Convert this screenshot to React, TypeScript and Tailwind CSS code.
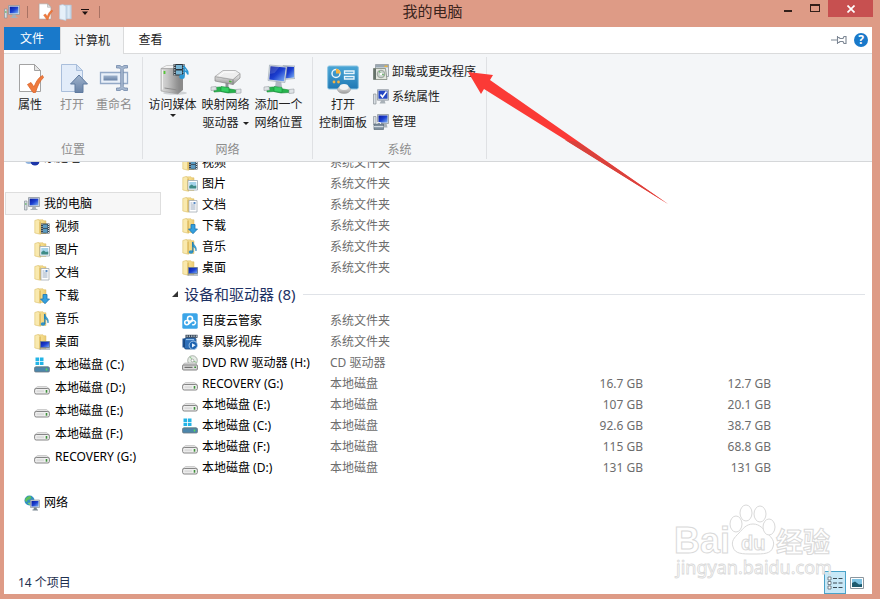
import clsx from 'clsx'
import React from 'react'

type IconName =
  | 'computer'
  | 'network'
  | 'homegroup'
  | 'video'
  | 'picture'
  | 'document'
  | 'download'
  | 'music'
  | 'desktop'
  | 'system'
  | 'disk'
  | 'dvd'
  | 'cloud'
  | 'player'

interface TreeItem {
  icon: IconName
  name: string
}

interface FileItem extends TreeItem {
  type: string
  total?: string
  free?: string
}

const treeItems: TreeItem[] = [
  { icon: 'video', name: '视频' },
  { icon: 'picture', name: '图片' },
  { icon: 'document', name: '文档' },
  { icon: 'download', name: '下载' },
  { icon: 'music', name: '音乐' },
  { icon: 'desktop', name: '桌面' },
  { icon: 'system', name: '本地磁盘 (C:)' },
  { icon: 'disk', name: '本地磁盘 (D:)' },
  { icon: 'disk', name: '本地磁盘 (E:)' },
  { icon: 'disk', name: '本地磁盘 (F:)' },
  { icon: 'disk', name: 'RECOVERY (G:)' },
]

const folders: FileItem[] = [
  { icon: 'video', name: '视频', type: '系统文件夹' },
  { icon: 'picture', name: '图片', type: '系统文件夹' },
  { icon: 'document', name: '文档', type: '系统文件夹' },
  { icon: 'download', name: '下载', type: '系统文件夹' },
  { icon: 'music', name: '音乐', type: '系统文件夹' },
  { icon: 'desktop', name: '桌面', type: '系统文件夹' },
]

const devices: FileItem[] = [
  { icon: 'cloud', name: '百度云管家', type: '系统文件夹' },
  { icon: 'player', name: '暴风影视库', type: '系统文件夹' },
  { icon: 'dvd', name: 'DVD RW 驱动器 (H:)', type: 'CD 驱动器' },
  { icon: 'disk', name: 'RECOVERY (G:)', type: '本地磁盘', total: '16.7 GB', free: '12.7 GB' },
  { icon: 'disk', name: '本地磁盘 (E:)', type: '本地磁盘', total: '107 GB', free: '20.1 GB' },
  { icon: 'system', name: '本地磁盘 (C:)', type: '本地磁盘', total: '92.6 GB', free: '38.7 GB' },
  { icon: 'disk', name: '本地磁盘 (F:)', type: '本地磁盘', total: '115 GB', free: '68.8 GB' },
  { icon: 'disk', name: '本地磁盘 (D:)', type: '本地磁盘', total: '131 GB', free: '131 GB' },
]

// shared gradients, referenced by id from every icon
function Gradients() {
  return (
    <svg className="absolute h-0 w-0" aria-hidden="true">
      <defs>
        <linearGradient id="screen" x1="0" y1="0" x2="1" y2="1">
          <stop offset="0" stopColor="#0a1a9c" />
          <stop offset="0.5" stopColor="#1c3fd0" />
          <stop offset="1" stopColor="#7fb4f5" />
        </linearGradient>
        <linearGradient id="folder" x1="0" y1="0" x2="1" y2="0">
          <stop offset="0" stopColor="#f6e29a" />
          <stop offset="0.55" stopColor="#f3d987" />
          <stop offset="1" stopColor="#e9ca72" />
        </linearGradient>
        <linearGradient id="metal" x1="0" y1="0" x2="0" y2="1">
          <stop offset="0" stopColor="#f4f4f4" />
          <stop offset="1" stopColor="#9b9b9b" />
        </linearGradient>
        <linearGradient id="tower" x1="0" y1="0" x2="1" y2="0">
          <stop offset="0" stopColor="#d9d9d9" />
          <stop offset="0.4" stopColor="#c4c4c4" />
          <stop offset="1" stopColor="#8f8f8f" />
        </linearGradient>
        <linearGradient id="panel" x1="0" y1="0" x2="0" y2="1">
          <stop offset="0" stopColor="#4aa6d6" />
          <stop offset="1" stopColor="#1f78b4" />
        </linearGradient>
        <linearGradient id="steel" x1="0" y1="0" x2="0" y2="1">
          <stop offset="0" stopColor="#9fb3cd" />
          <stop offset="1" stopColor="#6882a6" />
        </linearGradient>
      </defs>
    </svg>
  )
}

function FolderShape() {
  return (
    <>
      <path d="M4 .8h5l1 1h2v12.700H4z" fill="url(#folder)" stroke="#dcbf6a" strokeWidth=".5" />
      <path d="M.8 1.500L4 .5l2.500 1.800v13L.8 14z" fill="#f9e9ae" stroke="#dcbf6a" strokeWidth=".6" />
      <path d="M5.300 2.200l1.400.8v12l-1.400-.5z" fill="#dfb95c" />
    </>
  )
}

const iconShapes: Record<IconName, React.ReactNode> = {
  computer: (
    <>
      <path d="M.5 5H3v9H.5z" fill="#d8dde2" stroke="#8a9299" strokeWidth=".7" />
      <path d="M1 8h1.500" stroke="#3aa83a" />
      <path d="M4.500 1.500h11v9h-11z" fill="#cfd6dc" stroke="#8f979e" strokeWidth=".8" />
      <path d="M5.700 2.700h8.600v6.600H5.700z" fill="url(#screen)" />
      <path d="M8.500 10.500h3l.8 2.500h1.200v1h-7v-1h1.400z" fill="#a9b1b8" />
    </>
  ),
  network: (
    <>
      <circle cx="5.500" cy="5.500" r="5" fill="#2f8fc4" />
      <path d="M1.500 3.500q2-3 5-2.500l1 2-2 1.500-2 .5-.5 2-2-1z" fill="#5fc15a" />
      <path d="M3.500 8l2-.5 1 1-1 1.500z" fill="#7fd06a" />
      <path d="M6.500 5h9v7.500h-9z" fill="#cdd5dc" stroke="#8f979e" strokeWidth=".7" />
      <path d="M7.500 6h7v5.500h-7z" fill="url(#screen)" />
      <path d="M10 12.500h2.500l.5 2h1v1H8.500v-1h1z" fill="#76838e" />
    </>
  ),
  homegroup: (
    <>
      <circle cx="5" cy="10" r="4" fill="#8fb2dd" />
      <circle cx="11" cy="11" r="4.500" fill="#1c36a8" />
      <circle cx="8" cy="6" r="3" fill="#45a0cf" />
    </>
  ),
  video: (
    <>
      <FolderShape />
      <path d="M7 4.500h8.500v10H7z" fill="#35414b" />
      <path d="M9 5.500h4.500v3.800H9zM9 10h4.500v3.800H9z" fill="#5b9ac0" />
      <path d="M8 5v9.500M14.500 5v9.500" stroke="#e8eef2" strokeWidth=".9" strokeDasharray="1 1" />
    </>
  ),
  picture: (
    <>
      <FolderShape />
      <path d="M6 4.500h9.500V14H6z" fill="#fff" stroke="#9aa8b3" strokeWidth=".8" />
      <path d="M7.300 6h7v6.500h-7z" fill="#a4d3ea" />
      <path d="M7.300 12.500V10l2.500-1.500 2 1.500 2.500-.5v3z" fill="#3f8b86" />
    </>
  ),
  document: (
    <>
      <FolderShape />
      <path d="M7 3.500h8V15H7z" fill="#fff" stroke="#a2abb3" strokeWidth=".8" />
      <path d="M8.500 6h2M8.500 8h5M8.500 10h5M8.500 12h5" stroke="#7c93ad" strokeWidth=".8" />
      <path d="M11.500 5h2v2h-2z" fill="#5a8bc4" />
    </>
  ),
  download: (
    <>
      <FolderShape />
      <path d="M9 6.500h4V11h2.500L11 15.700 6.500 11H9z" fill="#34a0de" stroke="#1b74b3" strokeWidth=".8" />
    </>
  ),
  music: (
    <>
      <FolderShape />
      <path d="M10.500 3c.3 3 5 4 3.500 9-.3-3-1.500-4-3.500-4.500z" fill="#3aa2d4" stroke="#1f7fb5" strokeWidth=".6" />
      <ellipse cx="9" cy="13" rx="2.300" ry="1.800" fill="#2f93c8" />
      <path d="M10.800 3v10" stroke="#1f7fb5" strokeWidth="1.200" />
    </>
  ),
  desktop: (
    <>
      <FolderShape />
      <path d="M6.500 7.500h9v6h-9z" fill="url(#screen)" stroke="#6d7f93" strokeWidth=".9" />
      <path d="M5.500 15H16" stroke="#7b8794" />
    </>
  ),
  system: (
    <>
      <path d="M1.500.5H5V4H1.500zM5.800.5h3.700V4H5.800zM1.500 4.800H5V8H1.500zM5.800 4.800h3.700V8H5.800z" fill="#22b4e6" />
      <path d="M2 9h12l1.500 2H.5z" fill="#9fc7c9" />
      <rect x=".5" y="10" width="15" height="5" rx="1.200" fill="#4c86ab" stroke="#6f7a80" strokeWidth=".8" />
      <path d="M12.500 11.500v2" stroke="#59e04f" strokeWidth="1.500" />
    </>
  ),
  disk: (
    <>
      <path d="M3.500 6.500h9L15.500 9H.5z" fill="#e3e3e3" stroke="#b5b5b5" strokeWidth=".6" />
      <rect x=".6" y="8.500" width="14.800" height="5.500" rx="1.600" fill="#efefef" stroke="#868686" />
      <path d="M2.500 11.200h7.500" stroke="#dcdcdc" strokeWidth="2" />
      <path d="M12.500 10v2.700" stroke="#3e8f3a" strokeWidth="1.600" />
    </>
  ),
  dvd: (
    <>
      <circle cx="10.500" cy="5.500" r="4.800" fill="#e6ece6" stroke="#8e978e" strokeWidth=".7" />
      <path d="M10.500 5.500L8 1.500M10.500 5.500l4 2" stroke="#8fc48c" />
      <circle cx="10.500" cy="5.500" r="1.400" fill="#fff" stroke="#8e978e" strokeWidth=".7" />
      <path d="M2.500 8h11l2 2.500H.5z" fill="#dcdcdc" stroke="#999" strokeWidth=".5" />
      <rect x=".6" y="10" width="14.800" height="5" rx="1" fill="#dadada" stroke="#777" strokeWidth=".9" />
      <path d="M2.500 12.300h8" stroke="#555" />
      <path d="M12.300 12.300H14" stroke="#3e8f3a" strokeWidth="1.400" />
    </>
  ),
  cloud: (
    <>
      <rect x=".3" y=".3" width="15.400" height="15.400" rx="1.500" fill="#3ba5e8" />
      <g fill="none" stroke="#fff" strokeWidth="1.500">
        <circle cx="8" cy="5.800" r="2.500" />
        <circle cx="4.800" cy="9.600" r="2.100" />
        <path d="M6.500 10.800L9.800 8.200a2.100 2.100 0 1 1 .4 3.200" />
      </g>
    </>
  ),
  player: (
    <>
      <path d="M3.500.8h12v3h-12z" fill="#2c3b4c" />
      <path d="M4.500 2.200H15" stroke="#dce6ee" strokeWidth="1.200" strokeDasharray="1.300 1" />
      <path d="M.5 4.500h3v9h-3z" fill="#1d4f8f" />
      <rect x="2.500" y="4" width="11.500" height="11" rx="1.500" fill="#2f6fb8" stroke="#174479" strokeWidth=".8" />
      <path d="M4 5.500h8" stroke="#8fc1ee" strokeWidth="1.200" />
      <circle cx="11.300" cy="11.300" r="4.200" fill="#1e63b0" stroke="#b9d8f2" strokeWidth=".8" />
      <path d="M10 9.200l3.600 2.100-3.600 2.100z" fill="#e9f4fd" />
    </>
  ),
}

function Icon({ name }: { name: IconName }) {
  return (
    <svg viewBox="0 0 16 16" className="h-4 w-4 shrink-0" aria-hidden="true">
      {iconShapes[name]}
    </svg>
  )
}

function PageIcon({ className }: { className?: string }) {
  return (
    <svg viewBox="0 0 32 32" className={className} aria-hidden="true">
      <path d="M5.500 1.500h15l6 6v21h-21z" fill="#fff" stroke="#a3a3a3" />
      <path d="M20.500 1.500v6h6z" fill="#e6e6e6" stroke="#a3a3a3" />
      <path d="M13.500 21.500l3.500-2 3 4.500c2-5.500 4.500-9.500 8.500-11.500l1 2c-4 4-6 8.500-8 15H19z" fill="#ef7a3c" stroke="#d9632a" strokeWidth=".8" />
    </svg>
  )
}

function OpenIcon() {
  return (
    <svg viewBox="0 0 32 32" className="h-8 w-8" aria-hidden="true">
      <path d="M5.500 1.500h15l6 6v21h-21z" fill="#e2ecf9" stroke="#a9bedb" />
      <path d="M20.500 1.500v6h6z" fill="#cfdef1" stroke="#a9bedb" />
      <path d="M23 12l8.500 9H27v8.500h-8V21h-4.500z" fill="url(#steel)" stroke="#5f7a9f" />
    </svg>
  )
}

function RenameIcon() {
  return (
    <svg viewBox="0 0 32 32" className="h-8 w-8" aria-hidden="true">
      <path d="M2.500 9.500h27v11h-27z" fill="#e9f0f9" stroke="#93a9c7" strokeWidth="1.300" />
      <path d="M5.500 12.500h14v5h-14z" fill="url(#steel)" />
      <path d="M18.500 2.500H22l2 1.500 2-1.500h3.500V5h-3l-1.200 1.500v17l1.200 1.500h3v2.500H26L24 26l-2 1.500h-3.500V25h3l1.200-1.500v-17L21.500 5h-3z" fill="#a5b7cf" stroke="#7189ab" strokeWidth=".8" />
    </svg>
  )
}

function MediaIcon() {
  return (
    <svg viewBox="0 0 32 32" className="h-8 w-8" aria-hidden="true">
      <ellipse cx="18" cy="30" rx="12" ry="1.800" fill="#cfd2d5" />
      <path d="M4 5.500L9.500 2.500H26l-5 3z" fill="#f3f3f3" stroke="#a5a5a5" strokeWidth=".5" />
      <path d="M21 5.500l5-3V27l-5 4z" fill="#8b8b8b" />
      <path d="M4 5.500h17V31L4 28z" fill="url(#tower)" stroke="#999" strokeWidth=".6" />
      <path d="M5.500 7v19.500" stroke="#f1f1f1" />
      <path d="M7.500 8v3" stroke="#55c536" strokeWidth="1.800" />
      <path d="M7.500 25l12 1.800" stroke="#8c8c8c" />
      <path d="M16.500 1h11v11.500h-11z" fill="#27323b" />
      <path d="M19 2h6v4h-6zM19 7.500h6v4h-6z" fill="#79b6d5" />
      <path d="M17.800 1.500v11M26.300 1.500v11" stroke="#fff" strokeDasharray="1.200 1.200" />
      <path d="M27 13.500V2.500c0 3 5 3.500 3.800 9-.4-2.500-1.800-3.500-3.800-4" fill="none" stroke="#2b96d3" strokeWidth="1.400" />
      <ellipse cx="25" cy="13.800" rx="2.700" ry="2.200" fill="#2b96d3" />
    </svg>
  )
}

function Cable() {
  return (
    <>
      <path d="M4 24.500l6-.5 4 1.500 5 .3 7 1.200v2.500l-8 .5-7-1.500-7 .5z" fill="#27b34d" stroke="#188a38" strokeWidth=".6" />
      <path d="M1 24l5-.5.5 3.500-5.500.5zM26 26.500l5-.5v4l-5 .5z" fill="#dfe3e6" stroke="#9aa0a5" strokeWidth=".6" />
      <path d="M11 23.500l8 1v5l-8-1z" fill="#35cf62" stroke="#188a38" strokeWidth=".6" />
    </>
  )
}

function MapDriveIcon() {
  return (
    <svg viewBox="0 0 32 32" className="h-8 w-8" aria-hidden="true">
      <path d="M17 18v7" stroke="#8f9599" strokeWidth="3" />
      <Cable />
      <path d="M5 13.500l18 3v5l-18-3.500zM23 16.500l7-6v4.500l-7 6.500z" fill="url(#metal)" stroke="#868686" strokeWidth=".7" />
      <path d="M5 13.500L13 7.500h12.500l4.500 3-7 6z" fill="#eeeeee" stroke="#a0a0a0" strokeWidth=".7" />
      <path d="M9 13l5.500-4h10" stroke="#fff" fill="none" />
      <path d="M19 18.300l2.500.5" stroke="#49b637" strokeWidth="1.500" />
    </svg>
  )
}

function AddLocationIcon() {
  return (
    <svg viewBox="0 0 32 32" className="h-8 w-8" aria-hidden="true">
      <path d="M20 2.500l12 .5v12.500l-12 1z" fill="#d5dde5" stroke="#97a2ac" strokeWidth=".6" />
      <path d="M21 3.500l10 .5v10.500l-10 1z" fill="url(#screen)" />
      <path d="M13 17h5l1 7h-7z" fill="#aeb8c1" />
      <Cable />
      <path d="M6.500 2L24 3.500 22 19.500 5 17.500z" fill="#d5dde5" stroke="#97a2ac" strokeWidth=".6" />
      <path d="M7.500 3.200l15.300 1.300L21 18.200 6.300 16.500z" fill="url(#screen)" />
      <path d="M7.500 3.200l9 .8-5 6-4.700 1z" fill="#fff" opacity=".15" />
    </svg>
  )
}

function ControlPanelIcon() {
  return (
    <svg viewBox="0 0 32 32" className="h-8 w-8" aria-hidden="true">
      <rect x=".7" y="3" width="30.600" height="23" rx="1.500" fill="url(#panel)" stroke="#8bc4e2" />
      <circle cx="9" cy="10.500" r="4" fill="none" stroke="#e8f5fc" strokeWidth="1.500" />
      <path d="M9 10.500V5.800a4.700 4.700 0 0 1 4.700 4.700z" fill="#f5b341" />
      <path d="M17.500 8H27v2.500h-9.500zM17.500 13.500H27V16h-9.500z" fill="none" stroke="#e8f5fc" strokeWidth="1.300" />
      <circle cx="7" cy="19" r="1.400" fill="#f5b341" />
      <circle cx="11.500" cy="19" r="1.400" fill="#f5b341" />
      <ellipse cx="17" cy="26.500" rx="6.500" ry="4" fill="url(#metal)" stroke="#a5a5a5" strokeWidth=".6" />
      <ellipse cx="17" cy="24" rx="4.500" ry="3" fill="#f3f3f3" />
    </svg>
  )
}

function UninstallIcon() {
  return (
    <svg viewBox="0 0 16 16" className="h-4 w-4 shrink-0" aria-hidden="true">
      <path d="M2.500.5h13v12h-13z" fill="#e8edf0" stroke="#8b969d" strokeWidth=".8" />
      <path d="M3 1h12v2.500H3z" fill="#9aa8b3" />
      <path d="M11.500 1.500h3v1.500h-3z" fill="#e9b23d" />
      <path d="M.5 4.500h12l1.500 11H.5z" fill="#e3e7df" stroke="#7f887c" strokeWidth=".8" />
      <path d="M.5 4.500H3v11H.5z" fill="#66726a" />
      <circle cx="8" cy="10" r="3.800" fill="#c9d3cc" stroke="#8b958d" strokeWidth=".8" />
      <path d="M8 10L6 7M8 10l3.300 1" stroke="#65b365" />
      <circle cx="8" cy="10" r="1.200" fill="#fff" />
    </svg>
  )
}

function SystemPropertiesIcon() {
  return (
    <svg viewBox="0 0 16 16" className="h-4 w-4 shrink-0" aria-hidden="true">
      <path d="M.5 5H3v10H.5z" fill="#d8dde2" stroke="#8a9299" strokeWidth=".7" />
      <path d="M4.500.7h11v10.500h-11z" fill="#cfd6dc" stroke="#8f979e" strokeWidth=".8" />
      <path d="M5.500 1.700h9v8h-9z" fill="#2346c4" />
      <path d="M7.500 5.500l2 2.500 4-5.500" fill="none" stroke="#fff" strokeWidth="1.600" />
      <path d="M8.500 11h3l1 3.500h-6z" fill="#a9b1b8" />
    </svg>
  )
}

function ManageIcon() {
  return (
    <svg viewBox="0 0 16 16" className="h-4 w-4 shrink-0" aria-hidden="true">
      <path d="M.5 2.500H3v8H.5z" fill="#d8dde2" stroke="#8a9299" strokeWidth=".7" />
      <path d="M4.500.5h11v9h-11z" fill="#cfd6dc" stroke="#8f979e" strokeWidth=".8" />
      <path d="M5.500 1.500h9v7h-9z" fill="url(#screen)" />
      <path d="M9.500 9.500h4l1 4h-5z" fill="#a9b1b8" />
      <path d="M1 10h9.500v5.500H1z" fill="#7d8e9d" stroke="#5c6b78" strokeWidth=".7" />
      <path d="M4 10V8.500h3.500V10M1 12.700h9.500" fill="none" stroke="#e6ecf1" />
    </svg>
  )
}

function Caret() {
  return (
    <svg viewBox="0 0 6 3" className="h-[3px] w-[6px] shrink-0" aria-hidden="true">
      <path d="M0 0h6L3 3z" fill="#222" />
    </svg>
  )
}

function TitleBar() {
  return (
    <header className="grid h-[27px] grid-cols-[1fr_auto_1fr] pr-[7px] pl-1">
      <div className="flex h-6 items-center">
        <Icon name="computer" />
        <span className="ml-[7px] h-3 w-px bg-[#a87263]" />
        <button type="button" aria-label="属性" className="ml-2">
          <PageIcon className="h-[18px] w-[18px]" />
        </button>
        <button type="button" aria-label="新建文件夹" className="ml-1">
          <svg viewBox="0 0 16 16" className="h-[17px] w-[17px]" aria-hidden="true">
            <path d="M5 1h7.500v13H5z" fill="#c3d6e9" stroke="#b3c8dc" strokeWidth=".5" />
            <path d="M1.500 1.200L4.500.5l3 1.500v13.500l-6-1.500z" fill="#e6f0f9" stroke="#b3c8dc" strokeWidth=".6" />
            <path d="M10 1.500v12" stroke="#dbe8f4" strokeWidth="2" />
          </svg>
        </button>
        <button type="button" aria-label="自定义快速访问工具栏" className="ml-1 flex h-4 w-3 items-center justify-center">
          <svg viewBox="0 0 8 6" className="h-[6px] w-2" aria-hidden="true">
            <path d="M0 0h8v1H0zM1 2.500h6L4 6z" fill="#1b1110" />
          </svg>
        </button>
        <span className="ml-2 h-3 w-px bg-[#a87263]" />
      </div>
      <h1 className="pr-3 text-[15px] leading-[22px] text-[#3a241d]">我的电脑</h1>
      <div className="flex items-start justify-end">
        <button type="button" aria-label="最小化" className="flex h-[17px] w-[27px] items-center justify-center">
          <span className="mt-1 h-[2px] w-2 bg-[#33201a]" />
        </button>
        <button type="button" aria-label="最大化" className="flex h-[15px] w-[27px] items-center justify-center">
          <span className="h-2 w-[10px] border border-t-2 border-[#33201a]" />
        </button>
        <button type="button" aria-label="关闭" className="flex h-[17px] w-[45px] items-center justify-center bg-[#c75050]">
          <svg viewBox="0 0 8 8" className="h-2 w-2" aria-hidden="true">
            <path d="M.5.5l7 7M7.500.5l-7 7" stroke="#fff" strokeWidth="1.700" />
          </svg>
        </button>
      </div>
    </header>
  )
}

function Tabs() {
  return (
    <nav className="flex h-[27px] items-stretch border-b border-[#dadbdc] bg-white text-xs">
      <button type="button" className="mb-[3px] w-14 bg-[#1979ca] text-white">文件</button>
      <button type="button" className="-mb-px w-16 border-x border-[#dadbdc] bg-[#f5f6f7] text-[#222]">计算机</button>
      <button type="button" className="w-[53px] text-[#222]">查看</button>
      <div className="ml-auto flex items-center gap-[7px] pr-1">
        <button type="button" aria-label="固定功能区">
          <svg viewBox="0 0 16 10" className="h-[10px] w-4" aria-hidden="true">
            <path d="M0 5h6M6.500 1v8M6.500 2.500H8l1 1h3L13 1.500h2V8.500h-2l-1-2H9l-1 1H6.500" fill="none" stroke="#7d8794" strokeWidth="1.100" />
          </svg>
        </button>
        <button type="button" aria-label="帮助" className="h-[14px] w-[14px] rounded-full bg-[#1979ca] text-xs leading-[14px] font-bold text-white">?</button>
      </div>
    </nav>
  )
}

interface LargeButtonProps {
  icon: React.ReactNode
  lines: string[]
  className?: string
  disabled?: boolean
  menu?: boolean
}

function LargeButton({ icon, lines, className, disabled, menu }: LargeButtonProps) {
  return (
    <button
      type="button"
      disabled={disabled}
      className={clsx('flex flex-col items-center whitespace-nowrap', disabled ? 'text-[#8d8d8d]' : 'text-[#222]', className)}
    >
      <span className="mb-px">{icon}</span>
      {lines.map((line, index) => (
        <span key={line} className="flex items-center gap-1 leading-[18px]">
          {line}
          {menu && index === 1 && <Caret />}
        </span>
      ))}
      {menu && lines.length === 1 && <Caret />}
    </button>
  )
}

function RibbonGroup({ label, className, children }: { label: string, className?: string, children: React.ReactNode }) {
  return (
    <section className="mt-[3px] mb-[2px] flex shrink-0 flex-col border-r border-[#dfe1e4] pt-[6px]">
      <div className={clsx('flex h-[78px] items-start', className)}>{children}</div>
      <h2 className="text-center leading-[18px] text-[#8d8d8d]">{label}</h2>
    </section>
  )
}

function Ribbon() {
  return (
    <div className="flex border-b border-[#d5d7d9] bg-[#f4f6f8] text-xs">
      <RibbonGroup label="位置" className="pr-2 pl-[6px]">
        <LargeButton icon={<PageIcon className="h-8 w-8" />} lines={['属性']} className="w-10" />
        <LargeButton icon={<OpenIcon />} lines={['打开']} className="w-11" disabled />
        <LargeButton icon={<RenameIcon />} lines={['重命名']} className="w-10" disabled />
      </RibbonGroup>
      <RibbonGroup label="网络" className="pr-[7px] pl-[3px]">
        <LargeButton icon={<MediaIcon />} lines={['访问媒体']} className="w-[53px]" menu />
        <LargeButton icon={<MapDriveIcon />} lines={['映射网络', '驱动器']} className="w-[53px]" menu />
        <LargeButton icon={<AddLocationIcon />} lines={['添加一个', '网络位置']} className="w-[53px]" />
      </RibbonGroup>
      <RibbonGroup label="系统" className="gap-1 pr-[10px] pl-1">
        <LargeButton icon={<ControlPanelIcon />} lines={['打开', '控制面板']} className="w-[52px]" />
        <div className="flex flex-col gap-[7px] text-[#222]">
          <button type="button" className="flex items-center gap-[3px] leading-[18px]">
            <UninstallIcon />
            卸载或更改程序
          </button>
          <button type="button" className="flex items-center gap-[3px] leading-[18px]">
            <SystemPropertiesIcon />
            系统属性
          </button>
          <button type="button" className="flex items-center gap-[3px] leading-[18px]">
            <ManageIcon />
            管理
          </button>
        </div>
      </RibbonGroup>
    </div>
  )
}

function TreeRow({ item, root, selected }: { item: TreeItem, root?: boolean, selected?: boolean }) {
  return (
    <a
      href="#"
      className={clsx(
        'flex h-[23px] items-center border whitespace-nowrap',
        root ? 'gap-1 pl-[18px]' : 'gap-[5px] pl-7',
        selected ? 'border-[#dedede] bg-[#f7f7f7]' : 'border-transparent',
      )}
    >
      <Icon name={item.icon} />
      {item.name}
    </a>
  )
}

function Sidebar() {
  return (
    <aside className="w-40 shrink-0 pr-[3px] pl-px">
      {/* scrolled a little, the first row is half hidden */}
      <div className="-mt-4 flex flex-col gap-[23px]">
        <TreeRow item={{ icon: 'homegroup', name: '家庭组' }} root />
        <div>
          <TreeRow item={{ icon: 'computer', name: '我的电脑' }} root selected />
          {treeItems.map(item => <TreeRow key={item.name} item={item} />)}
        </div>
        <TreeRow item={{ icon: 'network', name: '网络' }} root />
      </div>
    </aside>
  )
}

function FileRow({ item }: { item: FileItem }) {
  return (
    <tr className="h-[21px] whitespace-nowrap text-[#6d6d6d]">
      <td className="p-0 pl-[10px] text-black">
        <span className="flex items-center gap-1">
          <Icon name={item.icon} />
          {item.name}
        </span>
      </td>
      <td className="p-0">{item.type}</td>
      <td className="p-0 text-right">{item.total}</td>
      <td className="p-0 text-right">{item.free}</td>
      <td className="p-0" />
    </tr>
  )
}

function FileList() {
  return (
    <main className="min-w-0 flex-1 pr-[7px] pl-2">
      <table className="-mt-[10px] w-full table-fixed border-collapse leading-[18px]">
        <colgroup>
          <col className="w-[158px]" />
          <col className="w-[185px]" />
          <col className="w-32" />
          <col className="w-32" />
          <col />
        </colgroup>
        <tbody>
          {folders.map(item => <FileRow key={item.name} item={item} />)}
        </tbody>
        <tbody>
          <tr className="h-8">
            <th colSpan={5} scope="rowgroup" className="p-0 text-left font-normal">
              <button type="button" className="flex w-full items-center text-[15px] text-[#1e3264]">
                <svg viewBox="0 0 6 6" className="mr-[6px] h-[6px] w-[6px]" aria-hidden="true">
                  <path d="M6 0v6H0z" fill="#333" />
                </svg>
                设备和驱动器 (8)
                <span className="ml-2 h-px flex-1 bg-[#e0e3e8]" />
              </button>
            </th>
          </tr>
          {devices.map(item => <FileRow key={item.name} item={item} />)}
        </tbody>
      </table>
    </main>
  )
}

function StatusBar() {
  return (
    <footer className="flex h-6 items-end pr-1 pl-[14px] text-xs text-[#1e2f4f]">
      <span className="leading-[23px]">14 个项目</span>
      <div className="ml-auto flex items-center">
        <button type="button" aria-label="详细信息" className="flex h-[23px] w-[22px] items-center justify-center border border-[#4aa3c9] bg-[#c8e8f7]">
          <svg viewBox="0 0 16 14" className="h-[14px] w-4" aria-hidden="true">
            <path d="M1 1h3v3H1zM1 5.500h3v3H1zM1 10h3v3H1z" fill="#fff" stroke="#5a6872" strokeWidth=".8" />
            <path d="M6 2.500h4M11.500 2.500h4M6 7h4M11.500 7h4M6 11.500h4M11.500 11.500h4" stroke="#3c4a54" />
          </svg>
        </button>
        <button type="button" aria-label="大图标" className="flex h-[23px] w-[22px] items-center justify-center">
          <svg viewBox="0 0 14 12" className="h-3 w-[14px]" aria-hidden="true">
            <path d="M.5.5h13v11H.5z" fill="#fff" stroke="#8b969e" />
            <path d="M2 2h10v8H2z" fill="#7fc3e3" />
            <path d="M2 6l3-1.500 4 3 3-.5v3H2z" fill="#1d5a6e" />
          </svg>
        </button>
      </div>
    </footer>
  )
}

function Watermark() {
  return (
    <svg
      viewBox="0 0 170 82"
      className="pointer-events-none absolute right-[40px] bottom-[14px] h-[82px] w-[170px] font-['Liberation_Sans','Noto_Sans_CJK_SC',sans-serif]"
      aria-hidden="true"
    >
      <g fill="#fff" stroke="#d9d9d9" strokeWidth="1">
        <text x="4" y="50" fontSize="36" fontWeight="700">Bai</text>
        <path d="M83 21c7 0 10 5 14 9 5 5 8 8 6 14-2 7-9 7-20 7s-18 0-20-7c-2-6 1-9 6-14 4-4 7-9 14-9z" />
        <ellipse cx="66" cy="21" rx="6" ry="8" />
        <ellipse cx="76" cy="10" rx="6" ry="8" />
        <ellipse cx="90" cy="11" rx="6" ry="8" />
        <ellipse cx="99" cy="24" rx="6" ry="8" />
        <text x="71" y="47" fontSize="20" fontWeight="700">du</text>
        <text x="106" y="49" fontSize="27" fontWeight="700">经验</text>
        <text x="6" y="71" fontSize="18" className="font-['Noto_Sans',sans-serif]" strokeWidth=".8">jingyan.baidu.com</text>
      </g>
    </svg>
  )
}

function App() {
  return (
    <div className="relative flex min-h-screen flex-col bg-[#de9b86] font-['Noto_Sans','Noto_Sans_CJK_SC',sans-serif] text-xs text-black">
      <Gradients />
      <TitleBar />
      <div className="mr-2 mb-[5px] ml-1 flex flex-1 flex-col bg-white">
        <Tabs />
        <Ribbon />
        <div className="flex flex-1 overflow-hidden">
          <Sidebar />
          <FileList />
        </div>
        <StatusBar />
      </div>
      <Watermark />
      <svg viewBox="0 0 200 134" className="pointer-events-none absolute top-[71px] left-[468px] h-[134px] w-[200px]" aria-hidden="true">
        <path d="M0 1l25 3-3 5L200 133 16 18l-3 5z" fill="#fb3a36" />
        <path d="M110 71L200 133 97 69z" fill="#d9423c" />
      </svg>
    </div>
  )
}

export default App
